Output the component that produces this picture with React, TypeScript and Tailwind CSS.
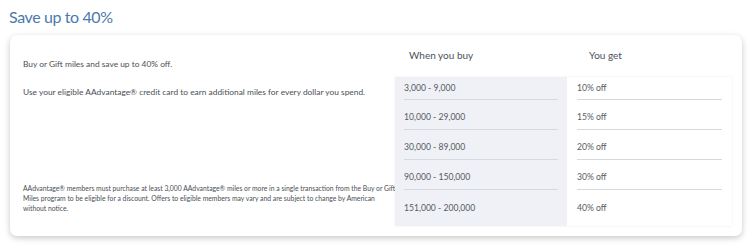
const tiers = [
  { buy: "3,000 - 9,000", get: "10% off" },
  { buy: "10,000 - 29,000", get: "15% off" },
  { buy: "30,000 - 89,000", get: "20% off" },
  { buy: "90,000 - 150,000", get: "30% off" },
  { buy: "151,000 - 200,000", get: "40% off" },
]

const rowCls = ["h-[23px] border-b", "h-[30px] pt-[6px] border-b", "h-[30px] pt-[6px] border-b", "h-[30px] pt-[6px] border-b", "h-[36px]"]

export default function App() {
  return (
    <div className="w-[750px] h-[246px] bg-white px-[10px] pt-[7px] font-['Lato','Open_Sans',sans-serif] text-[#36495a]">
      <h1 className="-ml-[1px] text-[16px] leading-[20px] font-normal tracking-[-0.4px] text-[#4a7aab]">Save up to 40%</h1>
      <div className="mt-[8px] w-[732px] h-[201px] rounded-[7px] bg-white shadow-[0_2px_6px_rgba(0,0,0,0.22)] flex pl-[13px] pr-[10px]">
        {/* Left copy */}
        <div className="w-[372px] flex flex-col text-[#4a4f55]">
          <p className="mt-[24px] text-[8.4px] leading-[10px]">Buy or Gift miles and save up to 40% off.</p>
          <p className="mt-[18px] text-[8.4px] leading-[10px]">Use your eligible AAdvantage® credit card to earn additional miles for every dollar you spend.</p>
          <p className="mt-auto mb-[23px] text-[6.8px] leading-[10px] whitespace-nowrap">
            AAdvantage® members must purchase at least 3,000 AAdvantage® miles or more in a single transaction from the Buy or Gift<br />
            Miles program to be eligible for a discount. Offers to eligible members may vary and are subject to change by American<br />
            without notice.
          </p>
        </div>
        {/* Table */}
        <div className="flex-1 flex flex-col">
          <div className="flex h-[38px] pt-[2px] items-center text-[10px] text-[#4a525b]">
            <div className="w-[172px] pl-[14px]">When you buy</div>
            <div className="pl-[22px]">You get</div>
          </div>
          <div className="flex h-[149px] mt-[4px] shadow-[0_0_2px_rgba(0,0,0,0.08)] text-[8.6px] text-[#555b61]">
            <div className="w-[172px] bg-[#eff1f6] px-[9px]">
              {tiers.map((t, i) => (
                <div key={t.buy} className={`flex items-center border-[#d5d8dd] ${rowCls[i]}`}>{t.buy}</div>
              ))}
            </div>
            <div className="flex-1 bg-white px-[10px]">
              {tiers.map((t, i) => (
                <div key={t.get} className={`flex items-center border-[#d5d8dd] ${rowCls[i]}`}>{t.get}</div>
              ))}
            </div>
          </div>
        </div>
      </div>
    </div>
  )
}
